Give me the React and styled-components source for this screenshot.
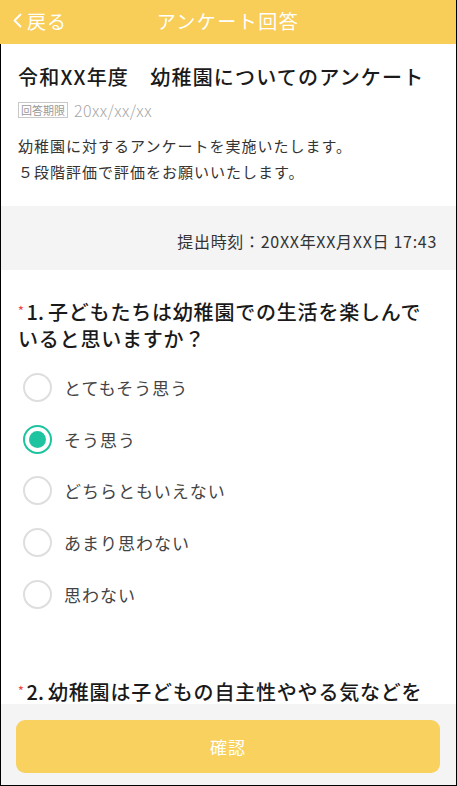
import React from 'react';
import styled, { createGlobalStyle } from 'styled-components';

const GlobalStyle = createGlobalStyle`
  html, body { margin: 0; padding: 0; background: #fff; }
  body {
    font-family: "Noto Sans CJK JP", "Noto Sans", sans-serif;
    color: #222;
  }
  * { box-sizing: border-box; }
`;

const Screen = styled.div`
  position: relative;
  width: 457px;
  height: 786px;
  overflow: hidden;
  display: flex;
  flex-direction: column;
  border-right: 1px solid #000;
`;

const Header = styled.header`
  height: 44px;
  flex-shrink: 0;
  background: #f8cd58;
  display: grid;
  grid-template-columns: 90px 1fr 90px;
  align-items: center;
  color: #fff;
  font-size: 19px;
  padding-bottom: 3px;
`;

const Back = styled.div`
  display: flex;
  align-items: center;
  padding-left: 13px;
  gap: 5px;
  letter-spacing: 1px;
`;

const Title = styled.div`
  text-align: center;
  letter-spacing: 1.5px;
`;

const Body = styled.main`
  flex: 1;
  overflow: hidden;
  border-left: 1px solid #000;
  border-bottom: 1px solid #000;
`;

const Intro = styled.section`
  padding: 18px 17px 21px;
`;

const SurveyName = styled.h1`
  margin: 0;
  font-size: 20px;
  line-height: 30px;
  font-weight: 500;
  letter-spacing: 1.2px;
  color: #1a1a1a;
  white-space: nowrap;
`;

const DeadlineRow = styled.div`
  margin-top: 8px;
  height: 20px;
  display: flex;
  align-items: center;
  gap: 6px;
`;

const Tag = styled.span`
  border: 1px solid #c8c8c8;
  color: #9a9a9a;
  font-size: 11px;
  line-height: 14px;
  padding: 0 2px;
`;

const DateText = styled.span`
  color: #a6a6a6;
  font-size: 16px;
  font-weight: 300;
  letter-spacing: 0.4px;
`;

const Description = styled.p`
  margin: 13px 0 0;
  font-size: 15px;
  line-height: 26px;
  letter-spacing: 1px;
  color: #333;
`;

const SubmittedBand = styled.div`
  background: #f4f4f4;
  padding: 24px 19px 18px;
  text-align: right;
  font-size: 16px;
  line-height: 22px;
  letter-spacing: 0.7px;
  color: #333;
`;

const Question = styled.section`
  padding: ${(p) => p.$top}px 26px 0 17px;
`;

const QuestionTitle = styled.h2`
  margin: 0;
  font-size: 20px;
  line-height: 27px;
  font-weight: 500;
  letter-spacing: 0.8px;
  color: #1a1a1a;
`;

const Required = styled.span`
  color: #f04a4a;
  font-size: 12px;
  vertical-align: 5px;
  margin-right: 2px;
`;

const Num = styled.span`
  letter-spacing: 0;
  margin-right: 4px;
`;

const Options = styled.div`
  margin-top: 10px;
  padding-left: 5px;
  display: flex;
  flex-direction: column;
`;

const Option = styled.label`
  height: 51.6px;
  display: flex;
  align-items: center;
  gap: 12px;
  font-size: 17px;
  color: #444;
  letter-spacing: 1px;
`;

const Radio = styled.span`
  width: 29px;
  height: 29px;
  border-radius: 50%;
  border: 2px solid ${(p) => (p.$checked ? '#1ec4a0' : '#dedede')};
  display: flex;
  align-items: center;
  justify-content: center;
  flex-shrink: 0;
  &::after {
    content: '';
    width: 17px;
    height: 17px;
    border-radius: 50%;
    background: ${(p) => (p.$checked ? '#1ec4a0' : 'transparent')};
  }
`;

const Footer = styled.footer`
  position: absolute;
  left: 1px;
  right: 0;
  bottom: 1px;
  height: 81px;
  background: #f4f4f4;
  padding: 16px 16px 0 15px;
`;

const ConfirmButton = styled.button`
  width: 100%;
  height: 53px;
  border: none;
  border-radius: 9px;
  background: #f8d15f;
  color: #fff;
  font-family: inherit;
  font-size: 17px;
  letter-spacing: 1px;
`;

const choices = ['とてもそう思う', 'そう思う', 'どちらともいえない', 'あまり思わない', '思わない'];

const ChevronLeft = () => (
  <svg width="9" height="15" viewBox="0 0 9 15" fill="none">
    <path d="M7.5 1.5 L1.5 7.5 L7.5 13.5" stroke="#fff" strokeWidth="1.8" strokeLinecap="round" strokeLinejoin="round" />
  </svg>
);

export default function App() {
  return (
    <Screen>
      <GlobalStyle />
      <Header>
        <Back>
          <ChevronLeft />
          <span>戻る</span>
        </Back>
        <Title>アンケート回答</Title>
        <div />
      </Header>
      <Body>
        <Intro>
          <SurveyName>令和XX年度　幼稚園についてのアンケート</SurveyName>
          <DeadlineRow>
            <Tag>回答期限</Tag>
            <DateText>20xx/xx/xx</DateText>
          </DeadlineRow>
          <Description>
            幼稚園に対するアンケートを実施いたします。
            <br />
            ５段階評価で評価をお願いいたします。
          </Description>
        </Intro>
        <SubmittedBand>提出時刻：20XX年XX月XX日 17:43</SubmittedBand>
        <Question $top={26}>
          <QuestionTitle>
            <Required>*</Required>
            <Num>1.</Num>子どもたちは幼稚園での生活を楽しんでいると思いますか？
          </QuestionTitle>
          <Options>
            {choices.map((c, i) => (
              <Option key={c}>
                <Radio $checked={i === 1} />
                {c}
              </Option>
            ))}
          </Options>
        </Question>
        <Question $top={56}>
          <QuestionTitle>
            <Required>*</Required>
            <Num>2.</Num>幼稚園は子どもの自主性ややる気などを伸ばせていると思いますか？
          </QuestionTitle>
        </Question>
      </Body>
      <Footer>
        <ConfirmButton>確認</ConfirmButton>
      </Footer>
    </Screen>
  );
}
